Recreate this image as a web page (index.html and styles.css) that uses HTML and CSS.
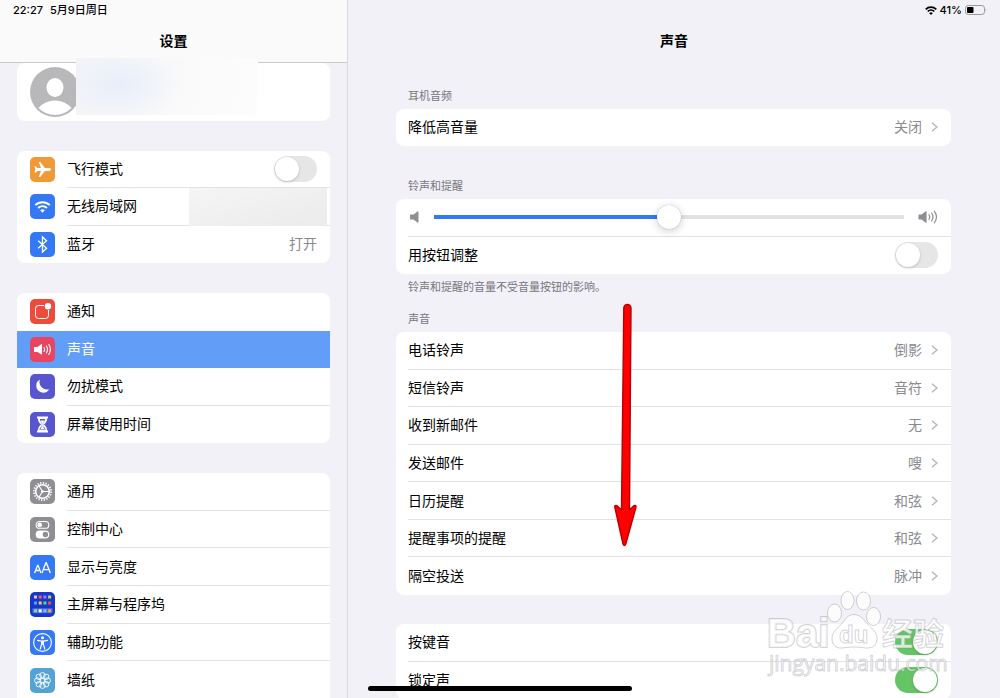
FILE: index.html
```html
<!DOCTYPE html>
<html lang="zh-CN">
<head>
<meta charset="utf-8">
<meta name="viewport" content="width=device-width, initial-scale=1">
<title>设置 - 声音</title>
<link rel="stylesheet" href="styles.css">
</head>
<body>
<div class="screen">
  <aside class="sidebar">
    <header class="bar bar--side">
      <div class="status"><span>22:27</span><span>5月9日周日</span></div>
      <h2 class="title">设置</h2>
    </header>
    <div class="side-list">
      <a class="card profile" href="#profile" aria-label="账户">
        <svg class="avatar" viewBox="0 0 50 50"><circle cx="25" cy="25" r="25" fill="#b8b8ba"/><ellipse cx="25" cy="20.500" rx="8.500" ry="9.500" fill="#fff"/><path d="M8.500 41Q15 33.500 25 33.500T41.500 41Q34.500 48 25 48T8.500 41z" fill="#fff"/></svg>
        <span class="mask mask--name"></span>
      </a>

      <div class="card rows-3">
        <label class="row" for="airplane">
          <svg class="icon" viewBox="0 0 25 25"><rect width="25" height="25" rx="5" fill="#f09a37"/><path d="M21 12.500c0-.9-1-1.400-2.200-1.400h-4L10.300 5H8.800l2.200 6.100H7.300L5.700 9.200H4.500l.9 3.300-.9 3.300h1.200l1.600-1.900H11L8.800 20h1.500l4.500-6.100h4c1.200 0 2.200-.5 2.200-1.400z" fill="#fff"/></svg>
          <span class="cell"><span class="text">飞行模式</span><input class="switch" id="airplane" type="checkbox"></span>
        </label>
        <a class="row" href="#wlan">
          <svg class="icon" viewBox="0 0 25 25"><rect width="25" height="25" rx="5" fill="#3478f6"/><g fill="none" stroke="#fff" stroke-width="1.900"><path d="M5.300 11.200a10.200 10.200 0 0 1 14.400 0"/><path d="M8.100 14a6.200 6.200 0 0 1 8.800 0"/></g><path d="M12.500 18.700l-2.300-2.400a3.300 3.300 0 0 1 4.600 0z" fill="#fff"/></svg>
          <span class="cell"><span class="text">无线局域网</span><span class="mask mask--wlan"></span></span>
        </a>
        <a class="row" href="#bluetooth">
          <svg class="icon" viewBox="0 0 25 25"><rect width="25" height="25" rx="5" fill="#3478f6"/><path d="M8.200 8.700l8.400 7.600-4.100 3.700V5l4.100 3.700-8.400 7.600" fill="none" stroke="#fff" stroke-width="1.300"/></svg>
          <span class="cell"><span class="text">蓝牙</span><span class="value">打开</span></span>
        </a>
      </div>

      <div class="card rows-4">
        <a class="row" href="#notify">
          <svg class="icon" viewBox="0 0 25 25"><rect width="25" height="25" rx="5" fill="#eb4d3d"/><path d="M14 6.500H8.500a3 3 0 0 0-3 3v7a3 3 0 0 0 3 3h7a3 3 0 0 0 3-3V11" fill="none" stroke="#fff" stroke-width="1"/><circle cx="18" cy="7.200" r="3.200" fill="#fff"/></svg>
          <span class="cell cell--plain"><span class="text">通知</span></span>
        </a>
        <a class="row row--selected" href="#sounds" aria-current="page">
          <svg class="icon" viewBox="0 0 25 25"><rect width="25" height="25" rx="5" fill="#ea4560"/><path d="M4 10h3.500L12 6.800v11L7.500 15H4z" fill="#fff"/><g fill="none" stroke="#fff" stroke-width="1.100" stroke-linecap="round"><path d="M14 10.500q1.200 2 0 4"/><path d="M16.400 9q2.200 3.500 0 7"/><path d="M18.800 7.500q3.200 5 0 10"/></g></svg>
          <span class="cell cell--plain"><span class="text">声音</span></span>
        </a>
        <a class="row" href="#dnd">
          <svg class="icon" viewBox="0 0 25 25"><rect width="25" height="25" rx="5" fill="#5756ce"/><path d="M10 5.500a7 7 0 1 0 9.300 9.700A7.500 7.500 0 0 1 10 5.500z" fill="#fff"/></svg>
          <span class="cell"><span class="text">勿扰模式</span></span>
        </a>
        <a class="row" href="#screentime">
          <svg class="icon" viewBox="0 0 25 25"><rect width="25" height="25" rx="5" fill="#5756ce"/><path d="M7 4.500h11v2h-1c0 3-1 4.500-3 6 2 1.500 3 3 3 6h1v2H7v-2h1c0-3 1-4.500 3-6-2-1.500-3-3-3-6H7z" fill="#fff"/><path d="M9.800 7h5.400q-.3 2-2 3.500v4q2 1 2.500 3.300H9.300q.5-2.300 2.500-3.300v-4Q10 9 9.800 7z" fill="#5756ce"/><path d="M10.500 8.500h4l-1.600 2.500v3.500l2 2.700h-4.800l2-2.700V11z" fill="#fff"/></svg>
          <span class="cell"><span class="text">屏幕使用时间</span></span>
        </a>
      </div>

      <div class="card card--open rows-6">
        <a class="row" href="#general">
          <svg class="icon" viewBox="0 0 25 25"><rect width="25" height="25" rx="5" fill="#8e8e93"/><g fill="none" stroke="#fff"><circle cx="12.500" cy="12.500" r="8.600" stroke-width="1.800" stroke-dasharray="1.300 1.402"/><circle cx="12.500" cy="12.500" r="6.800" stroke-width="1.600"/><path d="M12.500 12.500H19M12.500 12.500L9 6.700M12.500 12.500L9 18.300" stroke-width="1.100"/></g><circle cx="12.500" cy="12.500" r="1.300" fill="#fff"/></svg>
          <span class="cell"><span class="text">通用</span></span>
        </a>
        <a class="row" href="#control">
          <svg class="icon" viewBox="0 0 25 25"><rect width="25" height="25" rx="5" fill="#8e8e93"/><rect x="6.200" y="4.500" width="12.600" height="6.800" rx="3.400" fill="none" stroke="#fff" stroke-width="1.100"/><circle cx="9.700" cy="7.900" r="2.300" fill="#fff"/><rect x="5.700" y="13.500" width="13.600" height="8" rx="4" fill="#fff"/><circle cx="15.400" cy="17.500" r="2.700" fill="#8e8e93"/></svg>
          <span class="cell"><span class="text">控制中心</span></span>
        </a>
        <a class="row" href="#display">
          <svg class="icon" viewBox="0 0 25 25"><rect width="25" height="25" rx="5" fill="#3478f6"/><g fill="none" stroke="#fff" stroke-width="1.300"><path d="M4.600 18l3-7.700h.4l3 7.700M5.700 15.500h4.300"/><path d="M12 18l3.900-10.300h.4L20.300 18M13.400 14.700h5.400"/></g></svg>
          <span class="cell"><span class="text">显示与亮度</span></span>
        </a>
        <a class="row" href="#home">
          <svg class="icon" viewBox="0 0 25 25"><rect width="25" height="25" rx="5" fill="#1538cc"/><rect x="2.500" y="16.300" width="20" height="5" rx="1" fill="#4d6fe6"/><path fill="#f3c0a8" d="M4 3.500h3v3H4z"/><path fill="#ff5a58" d="M8.700 3.500h3v3h-3z"/><path fill="#b06cf5" d="M13.400 3.500h3v3h-3z"/><path fill="#b8d84e" d="M18.100 3.500h3v3h-3z"/><path fill="#4ea9f5" d="M4 9.500h3v3H4z"/><path fill="#f7c945" d="M8.700 9.500h3v3h-3z"/><path fill="#6fd36b" d="M13.400 9.500h3v3h-3z"/><path fill="#f4503d" d="M18.100 9.500h3v3h-3z"/><path fill="#74e67c" d="M4 17.300h3v3H4z"/><path fill="#fff" d="M8.700 17.300h3v3h-3z"/><path fill="#7cc4ff" d="M13.400 17.300h3v3h-3z"/><path fill="#f5a04a" d="M18.100 17.300h3v3h-3z"/></svg>
          <span class="cell"><span class="text">主屏幕与程序坞</span></span>
        </a>
        <a class="row" href="#access">
          <svg class="icon" viewBox="0 0 25 25"><rect width="25" height="25" rx="5" fill="#3478f6"/><circle cx="12.500" cy="12.500" r="8.900" fill="none" stroke="#fff" stroke-width="1.100"/><circle cx="12.500" cy="7.700" r="1.500" fill="#fff"/><path d="M7.500 10.300l3.700.8h2.600l3.700-.8M11.600 11v3.500L10.200 19M13.400 11v3.500l1.400 4.500" fill="none" stroke="#fff" stroke-width="1.200" stroke-linecap="round"/><path d="M11.200 10.800h2.600v4h-2.600z" fill="#fff"/></svg>
          <span class="cell"><span class="text">辅助功能</span></span>
        </a>
        <a class="row" href="#wallpaper">
          <svg class="icon" viewBox="0 0 25 25"><rect width="25" height="25" rx="5" fill="#55a3d4"/><g fill="none" stroke="#fff" stroke-width=".9"><circle cx="12.500" cy="12.500" r="2.200"/><circle cx="12.500" cy="7.300" r="2.700"/><circle cx="16.200" cy="8.800" r="2.700"/><circle cx="17.700" cy="12.500" r="2.700"/><circle cx="16.200" cy="16.200" r="2.700"/><circle cx="12.500" cy="17.700" r="2.700"/><circle cx="8.800" cy="16.200" r="2.700"/><circle cx="7.300" cy="12.500" r="2.700"/><circle cx="8.800" cy="8.800" r="2.700"/></g></svg>
          <span class="cell"><span class="text">墙纸</span></span>
        </a>
      </div>
    </div>
  </aside>

  <main class="main">
    <header class="bar">
      <div class="status status--right">
        <svg class="wifi" viewBox="0 0 12 9"><g fill="none" stroke="#000" stroke-width="1.700"><path d="M.7 3.300a7.500 7.500 0 0 1 10.600 0"/><path d="M2.700 5.500a4.700 4.700 0 0 1 6.600 0"/></g><path d="M6 9L4.200 7.200a2.600 2.600 0 0 1 3.600 0z"/></svg>
        <span>41%</span>
        <svg class="battery" viewBox="0 0 22 10"><rect x=".5" y=".5" width="19" height="9" rx="2.800" fill="none" stroke="#98989d"/><rect x="2" y="2" width="6.500" height="6" rx="1"/><path d="M20.700 3.500q1.300 1.500 0 3z" fill="#98989d"/></svg>
      </div>
      <h1 class="title">声音</h1>
    </header>
    <div class="content">
      <h3 class="caption">耳机音频</h3>
      <div class="card rows-1">
        <a class="row" href="#reduce"><span class="cell"><span class="text">降低高音量</span><span class="value">关闭</span><svg class="chevron" viewBox="0 0 7 10"><path d="M1 .7L6 5 1 9.300"/></svg></span></a>
      </div>

      <h3 class="caption caption--far">铃声和提醒</h3>
      <div class="card rows-2">
        <div class="row">
          <div class="cell cell--volume">
            <svg class="speaker" viewBox="0 0 12 12"><path d="M2.500 3.500h3L9.500.5q1-.5 1 .5v10q0 1-1 .5l-4-3h-3Q2 8.500 2 8V4q0-.5.500-.5z"/></svg>
            <input class="slider" type="range" min="0" max="100" value="50" aria-label="铃声和提醒音量">
            <svg class="speaker speaker--loud" viewBox="0 0 20 14"><path d="M1 4.500h2.500l4.300-3.200q.8-.5.800.5v10.400q0 1-.8.500L3.500 9.500H1Q.5 9.500.5 9V5q0-.5.500-.5z"/><g fill="none" stroke="#8e8e93" stroke-width="1.200" stroke-linecap="round"><path d="M11 4.700q1.500 2.300 0 4.600"/><path d="M13.600 3q2.800 4 0 8"/><path d="M16.300 1.200q4.400 5.800 0 11.600"/></g></svg>
          </div>
        </div>
        <label class="row" for="buttons"><span class="cell"><span class="text">用按钮调整</span><input class="switch" id="buttons" type="checkbox"></span></label>
      </div>
      <p class="note">铃声和提醒的音量不受音量按钮的影响。</p>

      <h3 class="caption caption--near">声音</h3>
      <div class="card rows-7">
        <a class="row" href="#ringtone"><span class="cell"><span class="text">电话铃声</span><span class="value">倒影</span><svg class="chevron" viewBox="0 0 7 10"><path d="M1 .7L6 5 1 9.300"/></svg></span></a>
        <a class="row" href="#sms"><span class="cell"><span class="text">短信铃声</span><span class="value">音符</span><svg class="chevron" viewBox="0 0 7 10"><path d="M1 .7L6 5 1 9.300"/></svg></span></a>
        <a class="row" href="#newmail"><span class="cell"><span class="text">收到新邮件</span><span class="value">无</span><svg class="chevron" viewBox="0 0 7 10"><path d="M1 .7L6 5 1 9.300"/></svg></span></a>
        <a class="row" href="#sentmail"><span class="cell"><span class="text">发送邮件</span><span class="value">嗖</span><svg class="chevron" viewBox="0 0 7 10"><path d="M1 .7L6 5 1 9.300"/></svg></span></a>
        <a class="row" href="#calendar"><span class="cell"><span class="text">日历提醒</span><span class="value">和弦</span><svg class="chevron" viewBox="0 0 7 10"><path d="M1 .7L6 5 1 9.300"/></svg></span></a>
        <a class="row" href="#reminders"><span class="cell"><span class="text">提醒事项的提醒</span><span class="value">和弦</span><svg class="chevron" viewBox="0 0 7 10"><path d="M1 .7L6 5 1 9.300"/></svg></span></a>
        <a class="row" href="#airdrop"><span class="cell"><span class="text">隔空投送</span><span class="value">脉冲</span><svg class="chevron" viewBox="0 0 7 10"><path d="M1 .7L6 5 1 9.300"/></svg></span></a>
      </div>

      <div class="card card--spaced rows-2">
        <label class="row" for="keys"><span class="cell"><span class="text">按键音</span><input class="switch" id="keys" type="checkbox" checked></span></label>
        <label class="row" for="lock"><span class="cell"><span class="text">锁定声</span><input class="switch" id="lock" type="checkbox" checked></span></label>
      </div>
    </div>
  </main>

  <svg class="arrow" viewBox="0 0 26 246" aria-hidden="true"><path d="M11.800 6a3.600 3.600 0 0 1 7.200 0L17.500 208l4.500-4.300q2.300-.8 2 1.500L13.800 242q-1.400 3.200-2.800 0L2.800 205.200q-.3-2.300 2-1.500l4.700 4.300z" fill="#f00" stroke="#b80000" stroke-width="1.400"/></svg>

  <svg class="watermark" viewBox="0 0 184 88" aria-hidden="true">
    <g>
      <ellipse cx="67.500" cy="24" rx="7" ry="9"/><ellipse cx="80.500" cy="11.500" rx="6.500" ry="9"/><ellipse cx="96.500" cy="12" rx="7" ry="9"/><ellipse cx="106.500" cy="27.500" rx="7" ry="9"/>
      <path d="M87 25.500c7 0 10 6 14 10 5 5 9 8 9 14 0 7-5 10-11 9.500-5-.5-8-1-12-1s-7 .5-12 1c-6 .5-10-3-10-9 0-7 4-9 9-14.500 4-4 6-10 13-10z"/>
    </g>
    <text class="wm-brand" x="0" y="58">Bai</text>
    <text class="wm-du" x="72" y="54">du</text>
    <text class="wm-cn" x="115" y="56">经验</text>
    <text class="wm-url" x="2" y="82">jingyan.baidu.com</text>
  </svg>
  <div class="home-bar"></div>
</div>
</body>
</html>
```
FILE: styles.css
```css
* { box-sizing: border-box; }

body {
  margin: 0;
  background: #f2f1f7;
  color: #000;
  font-family: "Inter", "Noto Sans CJK SC", sans-serif;
  font-size: 14px;
  line-height: 20px;
}

a { color: inherit; text-decoration: none; }
svg { flex: none; }

.screen {
  position: relative;
  display: grid;
  grid-template-columns: minmax(260px, 347fr) 653fr;
  height: 100vh;
  overflow: hidden;
}

.sidebar { min-width: 0; }
.main { min-width: 0; border-left: 1px solid #dadae0; }

/* Status and title bars */
.bar { padding: 2px 13px 11px; }
.bar--side { background: #fafafb; border-bottom: 1px solid #cacace; }
.status {
  display: flex;
  align-items: center;
  gap: 7px;
  height: 16px;
  font-size: 11px;
  font-weight: 500;
}
.status--right { justify-content: flex-end; gap: 3px; }
.wifi { width: 12px; height: 9px; }
.battery { width: 22px; height: 10px; }
.title {
  margin: 13px 0 0;
  font-size: 14px;
  line-height: 20px;
  font-weight: 700;
  text-align: center;
}

/* Grouped lists */
.card {
  display: grid;
  grid-auto-rows: 1fr;
  background: #fff;
  border-radius: 8px;
}
.rows-1 { min-height: 37px; }
.rows-2 { min-height: 75px; }
.rows-3 { min-height: 112px; }
.rows-4 { min-height: 150px; }
.rows-6 { min-height: 226px; }
.rows-7 { min-height: 263px; }
.card--open { border-radius: 8px 8px 0 0; }

.side-list {
  display: flex;
  flex-direction: column;
  gap: 30px;
  padding: 0 17px;
}
.row { display: flex; align-items: center; gap: 12px; padding-left: 13px; }
.row--selected { background: #629ef8; color: #fff; }
.icon { width: 25px; height: 25px; }
.cell {
  position: relative;
  display: flex;
  flex: 1;
  align-items: center;
  align-self: stretch;
  min-width: 0;
  padding-right: 13px;
  border-bottom: 1px solid #e2e2e4;
}
.row:last-child .cell, .cell--plain { border-bottom-color: transparent; }
.text { flex: 1; }
.value { color: #8a8a8e; }

.profile {
  position: relative;
  display: flex;
  align-items: center;
  min-height: 58px;
  padding-left: 13px;
}
.avatar { width: 50px; height: 50px; }
.mask { position: absolute; }
.mask--name {
  left: 59px;
  top: -5px;
  width: 182px;
  height: 57px;
  background:
    radial-gradient(ellipse 60px 36px at 44px 26px, #e8eefa, transparent),
    linear-gradient(100deg, #f3f4f6, #f9f9fa 55%, #fdfdfd);
}
.mask--wlan {
  right: 3px;
  top: 0;
  bottom: -1px;
  width: 138px;
  background: linear-gradient(165deg, #f5f5f5, #ebebeb);
}

/* Sound page */
.content { padding: 26px 49px 0 48px; }
.content .row { padding-left: 12px; }
.caption, .note {
  margin: 0 12px 5px;
  color: #77777c;
  font-size: 11px;
  line-height: 16px;
  font-weight: 400;
}
.caption--far { margin-top: 32px; }
.caption--near { margin-top: 16px; }
.note { margin: 5px 12px 0; }
.card--spaced { margin-top: 29px; }
.chevron { width: 7px; height: 10px; margin-left: 9px; }
.chevron path { fill: none; stroke: #b5b5ba; stroke-width: 1.400; }
.cell--volume { gap: 14px; }
.speaker { width: 12px; height: 12px; fill: #8e8e93; }
.speaker--loud { width: 20px; height: 14px; }

.slider {
  flex: 1;
  min-width: 0;
  height: 24px;
  margin: 0;
  appearance: none;
  background: linear-gradient(90deg, #3478f6 50%, #e3e3e4 50%) center / 100% 4px no-repeat;
}
.slider::-webkit-slider-thumb {
  appearance: none;
  width: 24px;
  height: 24px;
  border-radius: 50%;
  background: #fff;
  box-shadow: 0 2px 8px rgba(0, 0, 0, .2), 0 0 1px rgba(0, 0, 0, .3);
}

.switch {
  appearance: none;
  display: flex;
  align-items: center;
  width: 43px;
  height: 26px;
  margin: 0;
  padding: 0 1px;
  border-radius: 13px;
  background: #e6e6e7;
}
.switch::before {
  content: "";
  width: 24px;
  height: 24px;
  border-radius: 50%;
  background: #fff;
  box-shadow: 0 1px 3px rgba(0, 0, 0, .2);
}
.switch:checked { justify-content: flex-end; background: #65c466; }

/* Overlays */
.arrow {
  position: absolute;
  left: 612px;
  top: 302px;
  width: 26px;
  height: 246px;
  pointer-events: none;
}
.watermark {
  position: absolute;
  right: 49px;
  bottom: 21px;
  width: 184px;
  height: 88px;
  overflow: visible;
  pointer-events: none;
  fill: rgba(255, 255, 255, .75);
  stroke: rgba(130, 130, 140, .35);
  stroke-width: 1;
  font-family: "Liberation Sans", "Noto Sans CJK SC", sans-serif;
}
.wm-brand { font-size: 40px; font-weight: 700; stroke-width: 2; paint-order: stroke; }
.wm-du { font-size: 24px; font-weight: 700; }
.wm-cn { font-size: 31px; font-weight: 700; font-family: "Noto Sans CJK SC", sans-serif; }
.wm-url { font-size: 21px; font-family: "Open Sans", sans-serif; }
.home-bar {
  position: absolute;
  left: 50%;
  bottom: 7px;
  width: 264px;
  height: 5px;
  margin-left: -132px;
  border-radius: 3px;
  background: #000;
}
```
